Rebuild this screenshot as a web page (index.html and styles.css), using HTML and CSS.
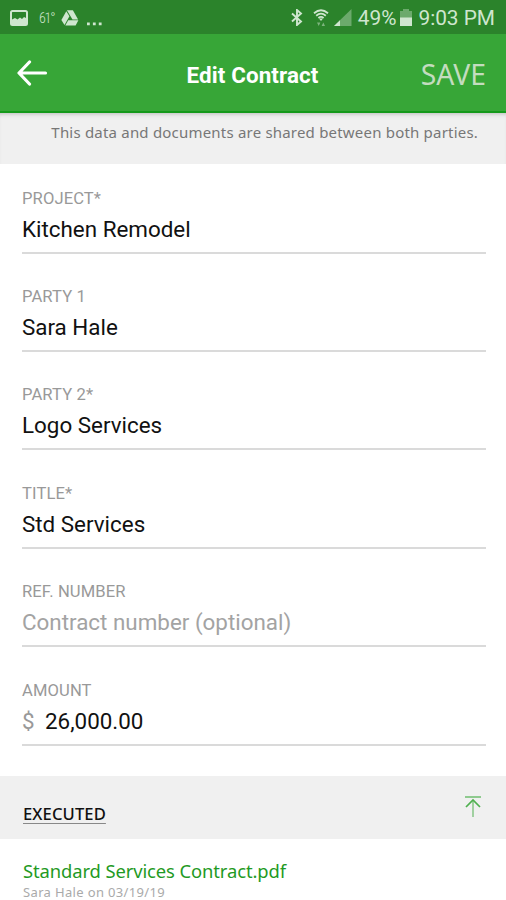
FILE: index.html
```html
<!DOCTYPE html>
<html lang="en">
<head>
    <meta charset="UTF-8">
    <meta name="viewport" content="width=device-width, initial-scale=1.0">
    <title>Edit Contract</title>
    <link rel="stylesheet" href="styles.css">
</head>
<body>

    <div class="status-bar">
        <div class="status-left">
            <svg class="icon-photo" width="18" height="16" viewBox="0 0 18 16">
                <rect x="1" y="1" width="16" height="14" rx="1.5" fill="none" stroke="currentColor" stroke-width="2"/>
                <path d="M2 14V9.5l3-1.5 2.5 1.5L10 7.5l2 1.5 2-2 2 1v6z" fill="currentColor"/>
            </svg>
            <span class="temp">61°</span>
            <svg class="icon-drive" width="18" height="16" viewBox="0 0 18 16">
                <path d="M5.9 0.3h6l5.2 9.2h-5.6z" fill="currentColor"/>
                <path d="M5.3 1.2L8.4 6.3 3.5 15 0.4 10z" fill="currentColor"/>
                <path d="M7.2 10.2h10.2L14.6 15.4H4.3z" fill="currentColor"/>
            </svg>
            <svg class="icon-more" width="15" height="4" viewBox="0 0 15 4">
                <path d="M0 0.5h2.8v2.8H0zM5.9 0.5h2.8v2.8H5.9zM11.8 0.5h2.8v2.8h-2.8z" fill="currentColor"/>
            </svg>
        </div>
        <div class="status-right">
            <svg class="icon-bluetooth" width="12" height="17" viewBox="0 0 12 17">
                <path d="M1 4.5l9 8L6 16V1l4 3.5-9 8" fill="none" stroke="currentColor" stroke-width="1.9"/>
            </svg>
            <svg class="icon-wifi" width="16" height="18" viewBox="0 0 16 18">
                <path d="M1 4.3Q8 -1.8 15 4.3M3.2 6.7Q8 2.6 12.8 6.7M5.4 9Q8 6.8 10.6 9" fill="none" stroke="currentColor" stroke-width="1.8"/>
                <path d="M6 9.5h4L8 12z" fill="currentColor"/>
                <path d="M4 13.5h3.4l-1.7 3.5zM8.6 17H12l-1.7-3.5z" fill="currentColor" opacity="0.5"/>
            </svg>
            <svg class="icon-signal" width="18" height="17" viewBox="0 0 18 17">
                <path d="M17.5 0v17H0z" fill="currentColor" opacity="0.4"/>
                <path d="M6 11.2V17H0z" fill="currentColor"/>
            </svg>
            <span class="percent">49%</span>
            <svg class="icon-battery" width="12" height="17" viewBox="0 0 12 17">
                <path d="M3 0h6v2h3v7H0V2h3z" fill="currentColor" opacity="0.4"/>
                <rect y="8.5" width="12" height="8.5" fill="currentColor"/>
            </svg>
            <span class="clock">9:03 PM</span>
        </div>
    </div>

    <header class="toolbar">
        <svg class="back" width="32" height="26" viewBox="0 0 32 26">
            <path d="M13.5 2L3 13l10.5 11M3.5 13H29.5" fill="none" stroke="currentColor" stroke-width="3.2" stroke-linecap="round" stroke-linejoin="round"/>
        </svg>
        <h1>Edit Contract</h1>
        <span class="save">SAVE</span>
    </header>

    <div class="notice"><span>This data and documents are shared between both parties.</span></div>

    <main class="form">
        <div class="field">
            <div class="label">PROJECT*</div>
            <div class="value">Kitchen Remodel</div>
        </div>
        <div class="field">
            <div class="label">PARTY 1</div>
            <div class="value">Sara Hale</div>
        </div>
        <div class="field">
            <div class="label">PARTY 2*</div>
            <div class="value">Logo Services</div>
        </div>
        <div class="field">
            <div class="label">TITLE*</div>
            <div class="value">Std Services</div>
        </div>
        <div class="field">
            <div class="label">REF. NUMBER</div>
            <div class="value placeholder">Contract number (optional)</div>
        </div>
        <div class="field">
            <div class="label">AMOUNT</div>
            <div class="value"><span class="currency">$</span>26,000.00</div>
        </div>
    </main>

    <div class="section">
        <span class="section-title">EXECUTED</span>
        <svg class="upload" width="18" height="24" viewBox="0 0 18 24">
            <path d="M1 2h16" fill="none" stroke="currentColor" stroke-width="2" opacity="0.6"/>
            <path d="M2 12l7-7 7 7" fill="none" stroke="currentColor" stroke-width="1.7"/>
            <path d="M9 5v17" fill="none" stroke="currentColor" stroke-width="2" opacity="0.5"/>
        </svg>
    </div>

    <div class="document">
        <div class="doc-name">Standard Services Contract.pdf</div>
        <div class="doc-meta">Sara Hale on 03/19/19</div>
    </div>

</body>
</html>
```

FILE: styles.css
```css
* {
    box-sizing: border-box;
}

body {
    margin: 0;
    height: 900px;
    overflow: hidden;
    background-color: #fff;
    font-family: Roboto, sans-serif;
    white-space: nowrap;
}

svg {
    display: block;
    flex: none;
}

/* status bar */
.status-bar {
    display: flex;
    justify-content: space-between;
    height: 34px;
    padding: 0 11px 0 10px;
    background-color: #2b832b;
    color: #cfe6cf;
}

.status-left,
.status-right {
    display: flex;
    align-items: center;
    height: 35px;
}

.temp {
    width: 16px;
    margin: 0 6px 0 11px;
    font-family: "Roboto Condensed", Roboto, sans-serif;
    font-size: 14px;
    font-weight: 300;
    letter-spacing: -1.2px;
}

.icon-more {
    margin: 13px 0 0 8px;
}

.icon-wifi {
    margin-left: 10px;
}

.icon-signal {
    margin-left: 5px;
}

.percent {
    margin-left: 6px;
    font-size: 20.8px;
}

.icon-battery {
    margin: 0 6px 0 4px;
}

.clock {
    font-size: 20.8px;
}

/* toolbar */
.toolbar {
    display: grid;
    grid-template-columns: 1fr auto 1fr;
    align-items: center;
    height: 79px;
    padding: 0 20px 0 16px;
    background-color: #37a637;
    border-bottom: 2px solid #159a1b;
    color: #fff;
}

.back {
    margin-top: 1px;
}

.toolbar h1 {
    margin: 4px 0 0 3px;
    font-size: 22.4px;
    font-weight: 700;
    letter-spacing: 0.1px;
}

.save {
    margin-top: 2px;
    justify-self: end;
    font-family: "Noto Sans", sans-serif;
    font-size: 28.3px;
    color: #c3dcbf;
}

/* shared data notice */
.notice {
    height: 51px;
    padding: 8px 28px 0;
    background-color: #f0f0f0;
    box-shadow: inset 0 4px 4px -3px #bbb;
    font-family: "Noto Sans", sans-serif;
    font-size: 15px;
    line-height: 22px;
    letter-spacing: 0.2px;
    text-align: right;
    color: #777;
}

/* form fields */
.form {
    display: flex;
    flex-direction: column;
    gap: 28.4px;
    height: 612px;
    padding: 19.6px 20px 0 22px;
}

.field {
    height: 70px;
    border-bottom: 2px solid #dadada;
}

.label {
    height: 30px;
    font-size: 16.6px;
    line-height: 30px;
    letter-spacing: 0.1px;
    color: #999;
}

.value {
    font-size: 22.4px;
    line-height: 31px;
    color: #111;
}

.placeholder {
    color: #a3a3a3;
}

.currency {
    display: inline-block;
    width: 23px;
    color: #999;
}

/* documents */
.section {
    display: flex;
    justify-content: space-between;
    height: 63px;
    padding: 19px 24px 0 23px;
    background-color: #f0f0f0;
    font-family: "Noto Sans", sans-serif;
}

.section-title {
    height: 28px;
    margin-top: 7px;
    font-size: 16.6px;
    font-weight: 500;
    line-height: 24px;
    letter-spacing: 0.1px;
    color: #111;
    text-decoration: underline;
    text-decoration-color: #888;
    text-underline-offset: 3px;
}

.upload {
    color: #4fb04f;
}

.document {
    padding: 19px 23px 0;
    font-family: "Noto Sans", sans-serif;
}

.doc-name {
    font-size: 18.4px;
    line-height: 26px;
    letter-spacing: -0.1px;
    color: #1f9a24;
}

.doc-meta {
    margin-top: 1px;
    font-size: 13px;
    line-height: 14px;
    letter-spacing: 0.35px;
    color: #aaa;
}
```
